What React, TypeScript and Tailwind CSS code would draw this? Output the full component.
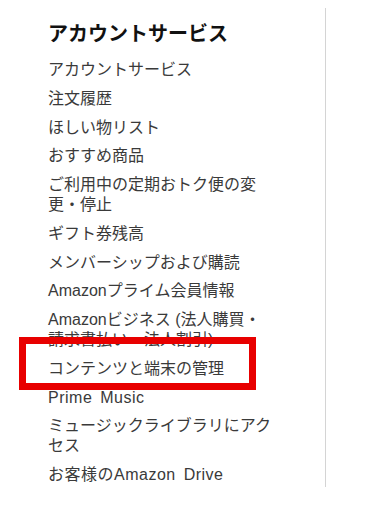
import React from "react";

type Item = { t: string; wide?: boolean };

const items: Item[] = [
  { t: "アカウントサービス" },
  { t: "注文履歴" },
  { t: "ほしい物リスト" },
  { t: "おすすめ商品" },
  { t: "ご利用中の定期おトク便の変更・停止" },
  { t: "ギフト券残高" },
  { t: "メンバーシップおよび購読" },
  { t: "Amazonプライム会員情報" },
  { t: "Amazonビジネス (法人購買・請求書払い・法人割引)" },
  { t: "コンテンツと端末の管理" },
  { t: "Prime Music", wide: true },
  { t: "ミュージックライブラリにアクセス" },
  { t: "お客様のAmazon Drive", wide: true },
];

export default function App() {
  return (
    <div
      className="w-[367px] h-[529px] bg-white overflow-hidden"
      style={{ fontFamily: '"Liberation Sans", "Noto Sans CJK JP", sans-serif' }}
    >
      <div className="mt-[8px] w-[326px] h-[479px] border-r border-[#d4d4d4] pl-[48px] pt-[14px]">
        <h2 className="text-[20px] leading-[24px] font-bold text-[#111111] mb-[14px]">
          アカウントサービス
        </h2>
        <ul className="w-[225px] flex flex-col gap-[8.75px]">
          {items.map(({ t, wide }) => (
            <li
              key={t}
              className={
                wide
                  ? "relative text-[16px] leading-[20px] text-[#3a3a3a] [word-spacing:3px] tracking-[0.5px]"
                  : "relative text-[16px] leading-[20px] text-[#3a3a3a]"
              }
            >
              {t}
              {t === "コンテンツと端末の管理" && (
                <div className="absolute left-[-29px] top-[-22px] w-[237px] h-[53px] border-[7px] border-[#e80000] z-10 pointer-events-none" />
              )}
            </li>
          ))}
        </ul>
      </div>
    </div>
  );
}
